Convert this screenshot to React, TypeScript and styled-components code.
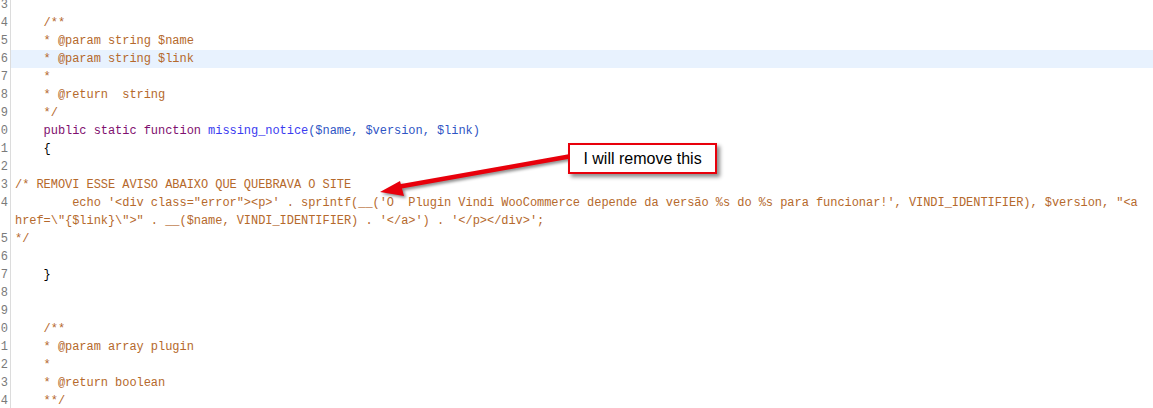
import styled, { createGlobalStyle } from 'styled-components';

const GlobalStyle = createGlobalStyle`
  html, body {
    margin: 0;
    padding: 0;
    background: #ffffff;
    overflow: hidden;
  }
`;

type Tok = { t: string; c?: 'comment' | 'keyword' | 'fn' | 'var' | 'plain' };
type Row = { n?: number; toks: Tok[]; active?: boolean };

const cm = (t: string): Tok => ({ t, c: 'comment' });

const rows: Row[] = [
  { n: 3, toks: [] },
  { n: 4, toks: [cm('    /**')] },
  { n: 5, toks: [cm('    * @param string $name')] },
  { n: 6, toks: [cm('    * @param string $link')], active: true },
  { n: 7, toks: [cm('    *')] },
  { n: 8, toks: [cm('    * @return  string')] },
  { n: 9, toks: [cm('    */')] },
  {
    n: 0,
    toks: [
      { t: '    public static function ', c: 'keyword' },
      { t: 'missing_notice', c: 'fn' },
      { t: '($name, $version, $link)', c: 'var' },
    ],
  },
  { n: 1, toks: [{ t: '    {', c: 'plain' }] },
  { n: 2, toks: [] },
  { n: 3, toks: [cm('/* REMOVI ESSE AVISO ABAIXO QUE QUEBRAVA O SITE')] },
  {
    n: 4,
    toks: [
      cm(
        `        echo '<div class="error"><p>' . sprintf(__('O  Plugin Vindi WooCommerce depende da versão %s do %s para funcionar!', VINDI_IDENTIFIER), $version, "<a`
      ),
    ],
  },
  { toks: [cm(`href=\\"{$link}\\">" . __($name, VINDI_IDENTIFIER) . '</a>') . '</p></div>';`)] },
  { n: 5, toks: [cm('*/')] },
  { n: 6, toks: [] },
  { n: 7, toks: [{ t: '    }', c: 'plain' }] },
  { n: 8, toks: [] },
  { n: 9, toks: [] },
  { n: 0, toks: [cm('    /**')] },
  { n: 1, toks: [cm('    * @param array plugin')] },
  { n: 2, toks: [cm('    *')] },
  { n: 3, toks: [cm('    * @return boolean')] },
  { n: 4, toks: [cm('    **/')] },
];

const colors: Record<string, string> = {
  comment: '#b5692c',
  keyword: '#7f0f6f',
  fn: '#3b3bf0',
  var: '#2f55c4',
  plain: '#000000',
};

const Editor = styled.div`
  position: relative;
  width: 1153px;
  height: 408px;
  overflow: hidden;
  font-family: 'Liberation Mono', 'DejaVu Sans Mono', monospace;
  font-size: 12px;
`;

const Lines = styled.div`
  display: flex;
  flex-direction: column;
  margin-top: -4px;
`;

const LineRow = styled.div<{ $active?: boolean }>`
  display: flex;
  height: 18px;
  line-height: 18px;
  background: ${p => (p.$active ? '#e8f2fe' : 'transparent')};
`;

const Gutter = styled.div`
  flex: 0 0 11px;
  width: 11px;
  box-sizing: border-box;
  padding-right: 2px;
  text-align: right;
  color: #7a7a7a;
  background: #ffffff;
  border-right: 1px solid #dcdcdc;
  white-space: nowrap;
`;

const Code = styled.div`
  padding-left: 4px;
  white-space: pre;
  letter-spacing: -0.05px;
`;

const Span = styled.span<{ $c: string }>`
  color: ${p => colors[p.$c]};
`;

const Callout = styled.div`
  position: absolute;
  left: 568px;
  top: 143px;
  width: 149px;
  height: 31px;
  box-sizing: border-box;
  border: 2px solid #e8000b;
  background: #ffffff;
  box-shadow: 3px 3px 4px rgba(0, 0, 0, 0.45);
  display: flex;
  align-items: center;
  justify-content: center;
  font-family: 'Liberation Sans', Arial, sans-serif;
  font-size: 16px;
  color: #000000;
`;

const ArrowSvg = styled.svg`
  position: absolute;
  left: 0;
  top: 0;
  filter: drop-shadow(2px 2px 1.5px rgba(0, 0, 0, 0.45));
  pointer-events: none;
`;

export default function App() {
  return (
    <>
      <GlobalStyle />
      <Editor>
        <Lines>
          {rows.map((r, i) => (
            <LineRow key={i} $active={r.active}>
              <Gutter>{r.n ?? ''}</Gutter>
              <Code>
                {r.toks.map((tk, j) => (
                  <Span key={j} $c={tk.c ?? 'plain'}>
                    {tk.t}
                  </Span>
                ))}
              </Code>
            </LineRow>
          ))}
        </Lines>
        <ArrowSvg width="1153" height="408" viewBox="0 0 1153 408">
          <path d="M569 156.5 L400 186.5" stroke="#e8000b" strokeWidth="4.5" strokeLinecap="round" />
          <polygon points="380,192 400,181 404,196" fill="#e8000b" />
        </ArrowSvg>
        <Callout>I will remove this</Callout>
      </Editor>
    </>
  );
}
